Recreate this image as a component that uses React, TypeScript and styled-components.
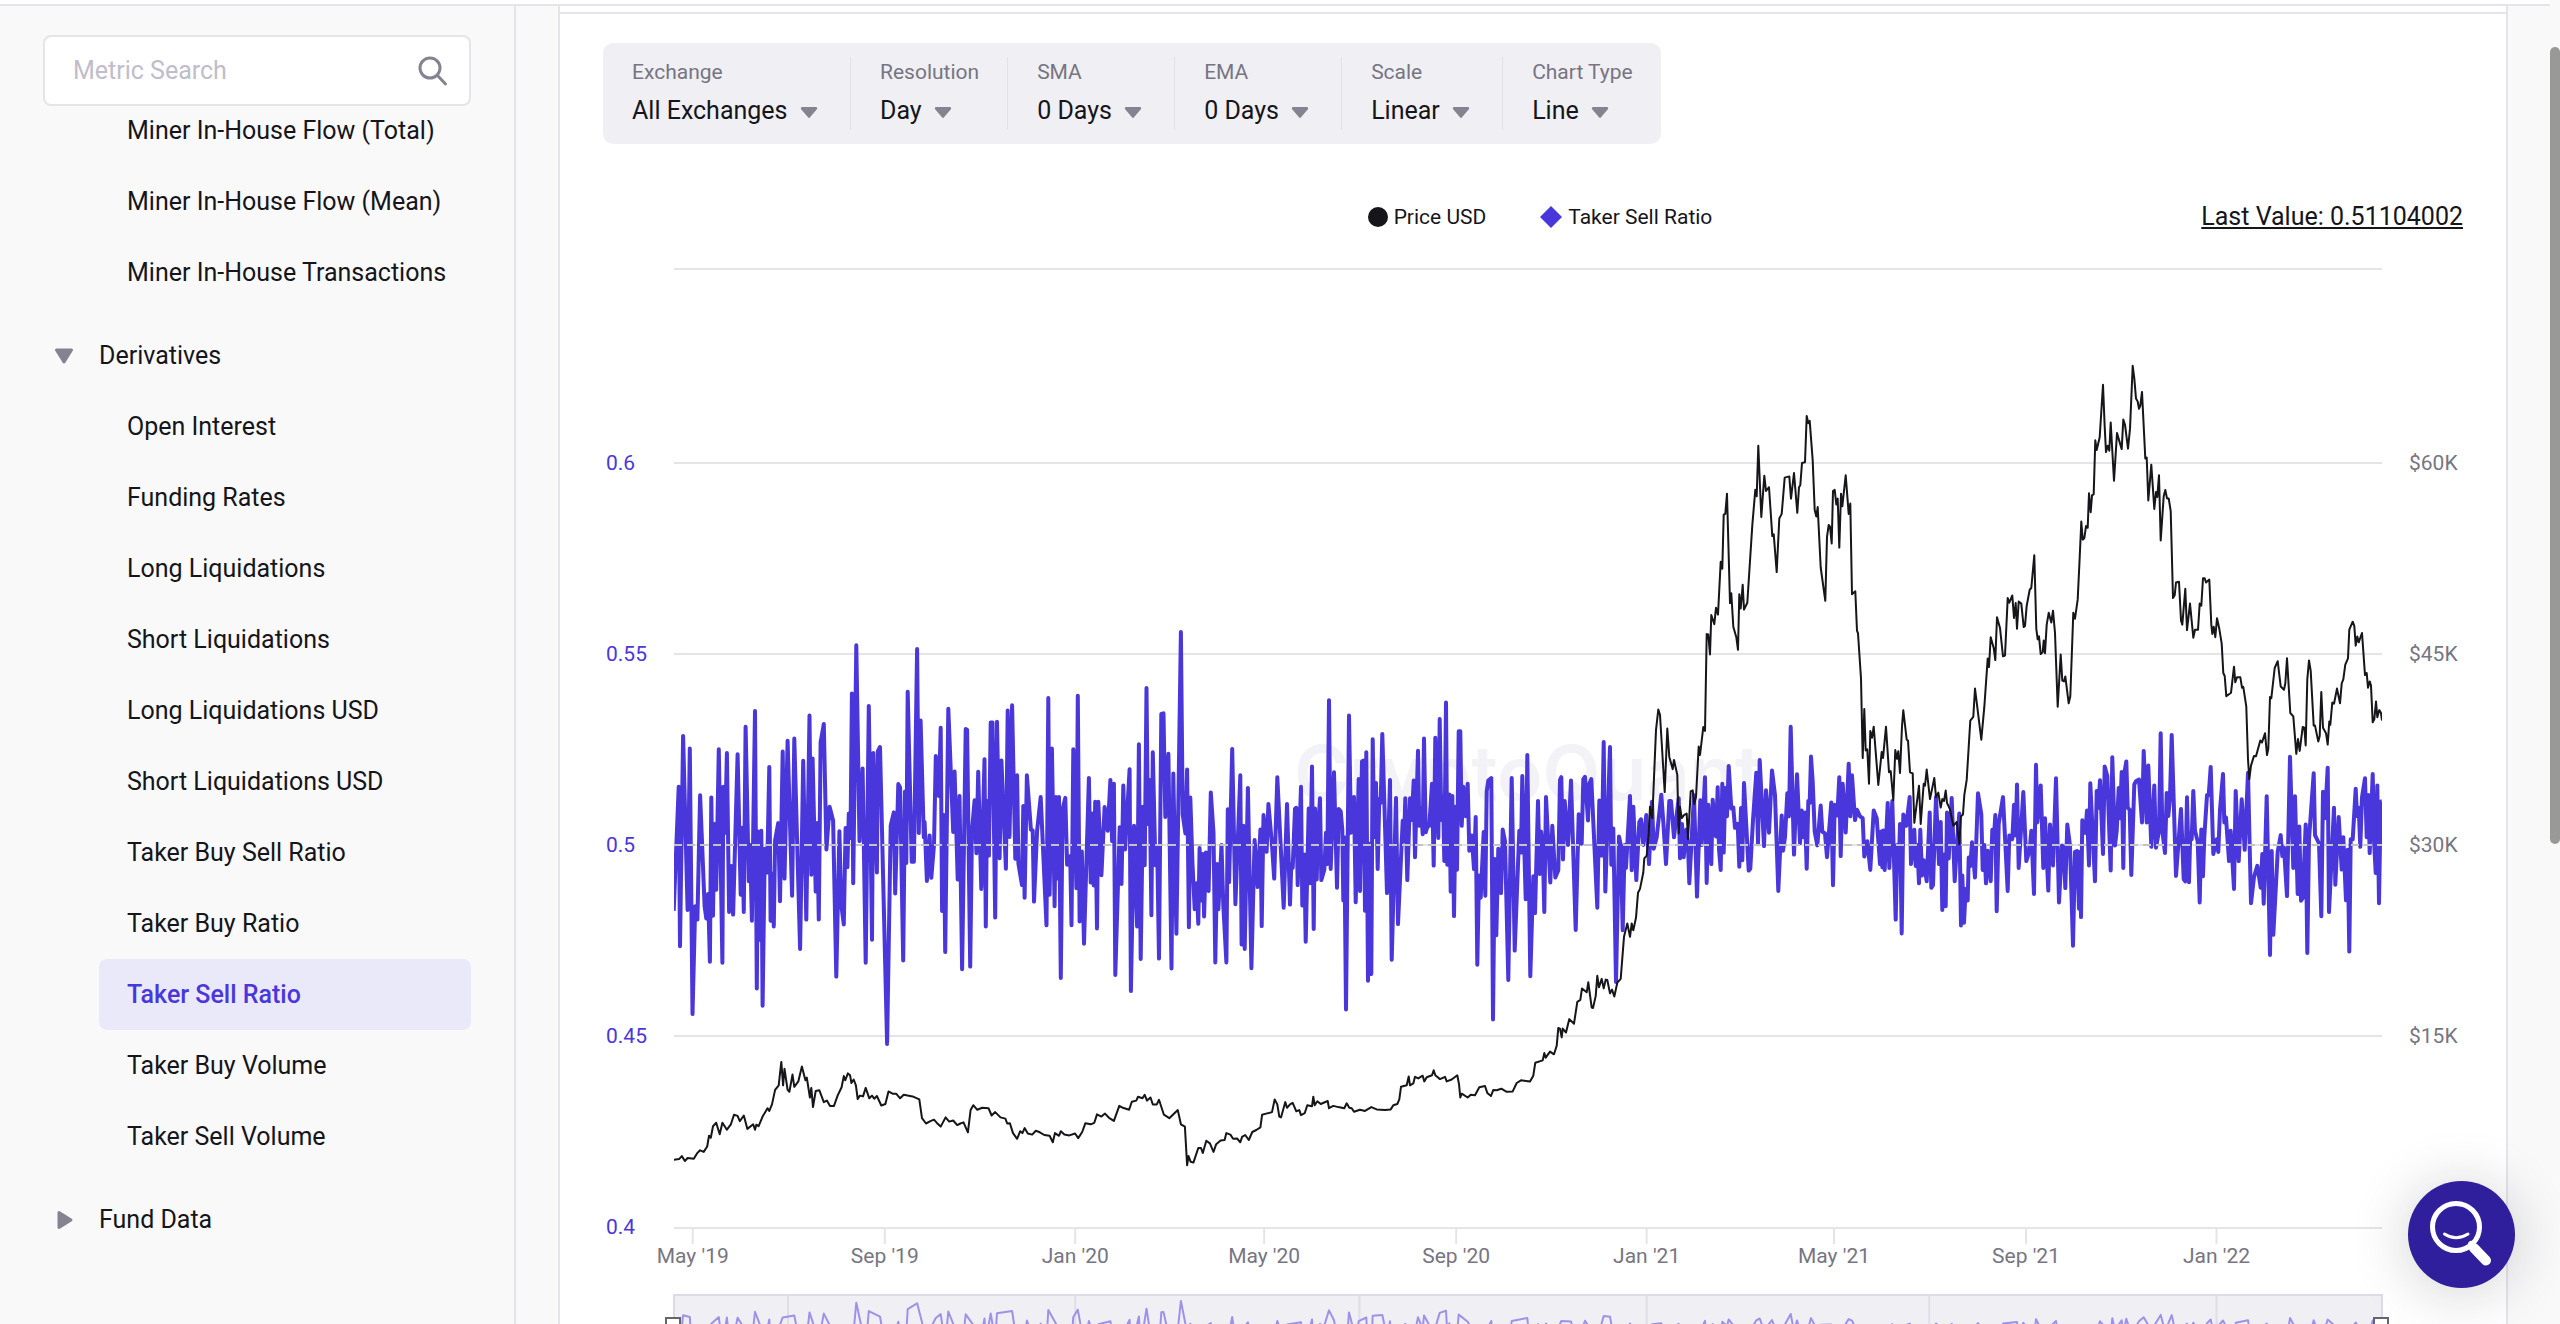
import React from 'react';
import styled, { createGlobalStyle } from 'styled-components';

const color = {
  page: '#f9f9fa',
  white: '#ffffff',
  line: '#e5e4eb',
  panel: '#f0eff4',
  text: '#15151a',
  muted: '#777582',
  icon: '#868391',
  placeholder: '#bfbdcb',
  accent: '#4a37db',
  accentSoft: '#eae9fa',
  fab: '#2f1f9c',
};

const GlobalStyle = createGlobalStyle`
  *, *::before, *::after { box-sizing: border-box; }
  html, body, #root { height: 100%; }
  body {
    margin: 0;
    overflow: hidden;
    background: ${color.page};
    color: ${color.text};
    font-family: Roboto, "Liberation Sans", sans-serif;
    font-size: 25px;
    line-height: 30px;
  }
  button, input, select { font: inherit; color: inherit; }
`;

/* ---------- series ---------- */

type Chunk = { origin: [number, number]; scale: [number, number]; points: string };
type Point = [number, number];

const PLOT_LEFT = 674;
const PLOT_TOP = 268;
const PLOT_WIDTH = 1708;
const PLOT_HEIGHT = 960;

const ratioChunks: Chunk[] = [
  {
    origin: [580, 600],
    scale: [2.24, 2.613],
    points: `210,812 221,488 224,905 231,355 241,810 246,388 252,1082 258,800 263,835 269,510 279,800 283,832 287,768 291,945 294,516 298,825 301,585 305,757 311,390 319,948 321,488 325,608 329,400 334,815 339,695 343,822 353,403 360,770 363,595 367,815 371,331 378,735 381,640 385,838 392,290 396,1015 399,605 402,888 406,603 409,1060 414,650 419,712 424,436 427,838 430,715 434,853 437,628 444,583 448,787 454,396 458,728 465,368 475,773 480,362 493,912 500,420 507,835 514,302 518,718 521,414 528,762 531,583 535,835 539,372 546,324 552,652 559,540 567,576 574,984 581,604 585,795 591,848 595,596 599,698 602,558 606,622 609,244 612,740 619,118 626,630 633,440 640,948 647,277 654,888 657,400 665,712 667,396 672,384 688,1160 696,590 703,555 706,767 713,481 717,490 724,942 728,500 731,687 734,240 743,684 748,684 755,128 759,609 763,315 770,620 772,580 777,734 783,615 787,726 793,640 797,408 804,512 808,334 811,813 815,562 818,920 825,284 836,606 839,448 846,730 850,512 856,965 864,337 867,339 874,958 878,603 884,523 888,662 892,449 899,755 906,416 909,853 912,525 916,668 920,320 924,320 930,830 934,318 940,675 944,419 954,702 958,289 962,619 968,275 975,676 979,458 982,688 990,745 993,538 996,778 1001,458 1010,600 1014,602 1017,788 1024,603 1032,515 1045,850 1049,256 1052,770 1057,388 1063,800 1066,515 1070,728 1073,515 1077,988 1081,547 1087,517 1091,692 1098,670 1101,850 1105,390 1112,753 1115,250 1119,840 1124,657 1129,898 1140,465 1144,738 1147,558 1151,746 1154,527 1158,858 1161,527 1168,719 1175,541 1182,603 1188,470 1192,630 1196,480 1199,980 1209,594 1213,742 1217,485 1221,652 1231,442 1234,1022 1241,590 1248,853 1252,377 1256,938 1261,540 1265,693 1269,230 1272,585 1276,470 1280,824 1283,398 1289,693 1293,648 1297,937 1302,298 1307,296 1311,567 1318,402 1325,963 1329,453 1336,872 1346,84 1350,560 1356,610 1360,443 1364,855 1367,516 1372,690 1377,808 1381,740 1385,846 1388,648 1392,785 1395,664 1398,827 1402,660 1408,760 1413,503 1419,607 1423,947 1427,690 1430,808 1437,640 1441,798 1448,947 1451,547 1454,737 1461,389 1468,795 1479,458 1482,900 1486,590 1489,912 1496,491 1504,962 1511,627 1518,750 1524,600 1527,852 1531,562 1538,658 1542,533 1550,640 1555,728 1562,463`,
  },
  {
    origin: [1200, 600],
    scale: [3, 2.613],
    points: `251,804 261,533 270,796 274,690 278,700 285,545 289,543 293,745 303,488 307,798 313,665 317,893 326,545 330,740 336,435 341,860 345,545 350,730 354,600 360,518 364,732 373,705 378,608 382,690 387,262 392,703 402,450 411,752 416,546 422,552 427,600 430,785 433,620 438,1070 447,302 453,608 462,515 467,790 476,468 480,760 486,422 490,420 495,812 499,398 504,995 509,637 514,977 518,364 523,620 528,478 533,703 538,520 542,530 547,350 561,766 570,470 575,940 588,517 594,847 608,577 612,630 616,518 622,732 630,518 635,575 641,472 645,672 654,394 658,590 663,545 668,612 672,362 677,607 683,590 688,590 696,480 701,694 706,360 715,622 719,311 724,575 729,515 733,682 738,268 742,692 748,508 752,762 757,512 762,826 767,540 771,705 776,343 781,343 785,590 790,488 797,565 803,480 808,655 815,615 822,703 827,567 832,953 837,720 842,778 851,606 856,773 860,500 865,472 874,465 879,1096 884,677 889,876 895,650 903,766 908,600 915,630 925,993 935,465 944,916 958,603 963,660 967,460 977,782 982,405 991,983 1000,722 1005,818 1014,525 1019,716 1023,605 1028,640 1033,815 1038,515 1051,738 1057,590 1066,725 1075,706 1080,470 1084,463 1089,678 1094,525 1104,640 1113,472 1127,862 1136,560 1145,637 1150,468 1155,462 1164,576 1168,480 1174,468 1192,804 1198,524 1205,668 1211,371 1216,762 1230,384 1234,692 1240,597 1248,998 1257,618 1262,640 1268,863 1274,640 1278,700 1290,512 1295,706 1300,540 1309,732 1318,580 1323,573 1330,640 1339,562 1347,690 1356,527 1361,650 1370,620 1384,509 1390,580 1398,690 1408,525 1413,525 1422,620 1436,518 1440,675 1446,585 1451,672 1459,600 1464,640`,
  },
  {
    origin: [1600, 380],
    scale: [3, 2.613],
    points: `268,1315 282,1085 291,1350 301,1098 305,1215 315,1038 320,1314 325,1110 334,1265 338,1097 348,1193 353,1064 357,1225 362,1280 367,1055 371,1235 376,1066 381,1140 386,1009 394,1120 400,1117 405,1170 413,1160 418,1272 423,1118 427,1255 432,1053 446,1282 451,1277 459,1150 469,1026 474,1213 479,993 492,1218 498,1072 507,1183 516,1020 525,1085 535,1335 545,1138 549,1230 555,1195 562,1080 567,1140 572,906 582,1240 591,1030 600,1210 605,1125 611,1195 615,1130 620,1277 625,1100 629,1105 633,984 638,1050 644,1180 652,1216 662,1112 667,1180 675,1185 681,1247 694,1104 699,1320 704,1110 712,1138 718,1038 722,1244 728,1055 737,1182 746,1003 751,1140 756,1033 765,1150 771,1123 780,1140 788,1145 793,1245 802,1205 811,1280 821,1125 830,1145 840,1265 844,1180 847,1273 850,1177 854,1280 863,1105 868,1275 877,1100 887,1410 892,1215 896,1280 900,1160 905,1446 910,1135 919,1165 929,1090 933,1265 943,1175 947,1270 952,1215 957,1315 961,1175 966,1295 971,1255 980,1310 989,1130 994,1327 999,1320 1008,1090 1017,1265 1022,1155 1027,1385 1032,1240 1037,1375 1041,1130 1046,1250 1055,1092 1064,1310 1072,1200 1078,1133 1083,1425 1087,1295 1092,1418 1097,1330 1103,1360 1106,1248 1111,1270 1116,1208 1125,1300 1134,1080 1144,1135 1148,1280 1153,1215 1158,1315 1163,1230 1172,1310 1177,1175 1181,1210 1186,1137 1190,1388 1196,1160 1209,1090 1223,1335 1228,1190 1237,1200 1242,1110 1247,1190`,
  },
  {
    origin: [1980, 330],
    scale: [3, 2.376],
    points: `111,1080 116,1278 130,1098 139,1262 149,1235 154,1190 162,1340 168,1033 172,1170 182,1082 190,1278 195,1160 205,1332 210,1175 219,1272 228,1065 237,1360 246,1225 251,1230 256,1326 262,1175 270,1225 279,1463 285,1240 291,1238 297,1375 299,1240 303,1395 307,1165 316,1195 321,1142 327,1272 331,1077 345,1310 350,1095 355,1135 360,1070 369,1245 374,1037 382,1060 392,1284 397,1015 405,1225 410,1190 416,1088 420,1160 425,1050 430,1278 434,1048 439,1025 443,1135 449,1140 454,1295 463,1080 468,1072 477,1068 486,1170 491,1000 500,1170 505,1035 514,1228 523,1082 528,1230 537,1190 542,958 547,1190 555,1243 560,1100 565,1155 570,1110 575,962 588,1297 603,1138 611,1305 616,1310 621,1110 627,1312 631,1195 635,1210 640,1095 645,1190 653,1215 659,1360 664,1187 669,1298 673,1205 681,1105 686,1105 692,1038 700,1245 710,1210 715,1240 720,1140 729,1055 733,1170 738,1158 747,1262 752,1190 762,1328 767,1095 776,1262 785,1115 794,1235 804,1052 813,1362 822,1300 832,1273 842,1325 847,1245 851,1363 860,1108 870,1485 875,1238 880,1437 893,1240 902,1200 907,1250 912,1230 921,1345 930,1014 940,1278 945,1108 953,1340 958,1180 963,1356 968,1350 977,1175 982,1480 987,1210 1001,1053 1005,1200 1017,1220 1024,1393 1029,1097 1035,1160 1043,1040 1047,1383 1062,1135 1066,1318 1076,1157 1085,1282 1090,1205 1098,1355 1103,1235 1108,1477 1112,1210 1118,1210 1127,1090 1131,1155 1136,1135 1141,1228 1146,1110 1155,1065 1160,1205 1165,1105 1169,1243 1178,1055 1183,1225 1187,1290 1192,1082 1197,1362 1202,1120 1205,1120`,
  },
];

const priceChunks: Chunk[] = [
  {
    origin: [580, 600],
    scale: [2.24, 2.613],
    points: `210,1463 222,1461 228,1453 235,1466 241,1458 255,1460 262,1446 269,1438 277,1442 285,1428 289,1400 293,1405 298,1375 305,1366 313,1396 319,1366 329,1384 338,1370 345,1345 353,1348 358,1362 367,1347 375,1382 388,1370 392,1384 395,1371 400,1375 409,1350 420,1328 424,1335 430,1318 437,1280 445,1268 451,1207 455,1268 458,1225 465,1280 469,1285 476,1240 480,1272 489,1258 497,1219 505,1255 508,1248 515,1300 518,1275 522,1325 528,1283 536,1281 546,1312 553,1308 560,1322 569,1322 577,1295 586,1273 591,1244 594,1255 600,1237 605,1242 608,1262 613,1253 618,1268 622,1304 627,1295 634,1297 640,1275 648,1302 654,1295 659,1303 665,1296 675,1321 684,1317 691,1284 700,1290 708,1290 717,1302 725,1293 745,1297 760,1305 766,1354 775,1368 785,1362 793,1358 800,1367 808,1376 819,1352 827,1363 836,1360 845,1372 852,1368 859,1365 869,1391 875,1333 881,1320 890,1332 901,1327 915,1328 922,1347 930,1338 942,1352 953,1355 957,1368 963,1367 970,1393 979,1408 986,1388 991,1393 996,1380 1003,1394 1013,1397 1021,1387 1030,1391 1040,1398 1052,1400 1059,1417 1064,1393 1073,1400 1077,1388 1085,1397 1096,1399 1109,1394 1116,1406 1125,1390 1132,1367 1144,1370 1152,1366 1158,1344 1168,1350 1176,1342 1185,1353 1196,1361 1208,1322 1216,1327 1230,1332 1236,1311 1246,1308 1250,1298 1260,1302 1265,1293 1270,1308 1278,1300 1283,1318 1292,1318 1297,1306 1308,1345 1320,1354 1328,1345 1339,1333 1346,1370 1355,1376 1360,1477 1363,1453 1368,1468 1374,1470 1385,1432 1391,1432 1395,1445 1403,1413 1411,1420 1419,1442 1425,1422 1435,1412 1444,1411 1448,1393 1457,1397 1463,1408 1472,1407 1479,1417 1483,1403 1490,1398 1498,1411 1506,1390 1515,1385 1524,1378 1528,1345 1537,1342 1550,1338`,
  },
  {
    origin: [1200, 600],
    scale: [3, 2.613],
    points: `224,1305 232,1318 238,1350 243,1352 256,1312 261,1327 270,1318 278,1314 289,1336 298,1333 303,1346 314,1341 322,1320 336,1323 340,1298 344,1320 352,1310 362,1317 383,1309 387,1328 400,1322 415,1325 433,1328 440,1315 448,1327 455,1328 462,1337 480,1332 495,1335 514,1325 530,1331 555,1333 572,1331 580,1320 592,1317 598,1305 603,1272 620,1268 626,1245 630,1268 640,1263 645,1246 655,1250 668,1243 673,1258 680,1247 696,1242 701,1229 706,1242 720,1252 735,1246 740,1258 755,1253 772,1242 777,1265 781,1300 785,1290 803,1300 812,1293 825,1294 838,1273 855,1270 862,1288 873,1296 880,1280 890,1281 904,1277 920,1285 938,1284 950,1262 963,1255 990,1258 1000,1243 1006,1209 1028,1203 1033,1184 1037,1196 1050,1180 1062,1187 1070,1165 1075,1118 1080,1120 1085,1143 1088,1120 1098,1130 1108,1095 1122,1107 1132,1050 1141,1045 1146,1015 1160,1025 1165,999 1175,1065 1179,1066 1187,1035 1192,982 1197,1012 1205,990 1211,1015 1217,992 1222,993 1230,1028 1236,1018 1243,1036 1252,1000 1262,990 1272,880 1282,845 1290,880 1295,845 1300,863 1308,830 1314,765 1320,755 1330,712 1333,675 1340,668 1346,610 1350,540 1357,570 1368,340 1375,286 1380,300 1394,502 1402,336 1408,410 1418,442 1422,418 1432,457 1436,610 1440,540 1445,570 1452,562 1460,558`,
  },
  {
    origin: [1600, 380],
    scale: [3, 2.613],
    points: `264,1200 272,1075 278,1072 283,1108 288,1090 296,958 300,980 310,907 315,917 320,664 325,665 330,717 334,614 343,638 348,595 354,613 362,475 367,493 371,352 376,350 381,297 390,583 394,557 400,645 409,672 414,705 418,560 422,597 428,535 432,600 442,582 457,380 466,287 470,304 475,172 484,358 493,250 498,290 507,280 517,408 521,403 530,502 538,362 545,350 554,255 568,252 573,310 582,243 592,347 597,280 601,275 606,217 615,215 620,94 625,113 629,107 638,210 644,340 649,357 653,332 662,490 676,577 681,410 686,379 690,383 695,427 699,290 704,287 709,325 713,310 718,438 723,297 727,330 737,249 746,350 751,323 756,560 766,552 771,655 774,662 783,780 788,988 793,860 797,968 802,965 807,1055 811,917 816,935 821,906 835,1058 845,972 849,988 858,906 867,1025 872,1022 880,1098 886,967 891,990 895,970 900,1027 906,905 910,863 920,940 924,942 930,1025 938,1028 943,1157 957,1060 962,1160 971,1055 975,1060 980,1018 990,1095 1003,1040 1008,1090 1015,1078 1022,1117 1027,1095 1032,1100 1037,1073 1041,1105 1050,1122 1060,1165 1070,1155 1078,1213 1083,1140 1089,1135 1093,1085 1100,1045 1111,890 1120,880 1125,806 1144,940 1153,855 1163,728 1167,750 1172,672 1181,700 1186,732 1191,620 1200,648 1209,722 1215,720 1223,570 1228,582 1237,563 1242,622 1247,583`,
  },
  {
    origin: [1980, 330],
    scale: [3, 2.376],
    points: `111,710 116,645 124,650 131,706 135,703 140,655 149,617 154,613 163,535 169,710 173,735 177,728 182,770 188,765 191,738 195,768 200,700 206,672 214,695 219,667 225,720 233,895 242,771 247,833 252,835 256,823 266,887 271,870 280,672 285,686 293,640 299,540 304,455 308,498 313,495 318,466 323,470 327,388 332,433 336,393 341,390 346,262 350,285 359,255 369,130 374,230 378,290 383,275 388,287 392,220 402,358 411,245 425,283 430,213 435,225 444,282 450,235 458,85 463,115 468,163 473,170 477,187 481,180 486,147 496,305 500,303 505,405 514,320 523,425 528,385 532,397 537,345 542,500 551,395 556,380 561,400 566,400 572,430 579,637 584,630 588,600 597,598 603,690 607,700 616,615 621,713 630,650 640,731 645,712 654,712 659,650 664,655 669,590 674,590 678,600 688,593 694,700 697,722 701,705 706,730 711,685 718,710 725,745 730,815 734,822 739,870 753,862 757,835 762,800 766,837 771,825 781,825 786,850 790,848 799,895 804,1020 808,1067 813,1035 822,1012 828,1013 841,975 846,980 855,958 861,1010 865,995 870,872 874,875 884,803 893,787 902,847 912,855 916,840 921,780 931,910 940,918 949,1007 954,972 959,1000 968,943 973,945 977,987 982,830 987,785 992,810 1001,940 1005,940 1015,978 1019,965 1024,860 1029,945 1038,958 1043,985 1048,930 1051,938 1057,885 1062,888 1071,852 1080,887 1085,840 1090,830 1096,795 1104,780 1108,712 1118,693 1123,703 1127,750 1132,728 1136,742 1146,720 1155,820 1160,815 1164,850 1169,835 1173,845 1178,932 1183,925 1188,883 1192,920 1198,903 1203,910 1206,928`,
  },
];

const decode = (chunks: Chunk[]): Point[] =>
  chunks.flatMap(({ origin, scale, points }) =>
    points.split(/\s+/).map((pair): Point => {
      const [x, y] = pair.split(',').map(Number);
      return [origin[0] + x / scale[0] - PLOT_LEFT, origin[1] + y / scale[1] - PLOT_TOP];
    }),
  );

const toPath = (points: Point[]) => points.map(([x, y]) => `${x.toFixed(1)},${y.toFixed(1)}`).join(' ');

/* Keeps the highest and the lowest sample of each group, in time order. */
const thin = (points: Point[], size: number): Point[] => {
  const out: Point[] = [];
  for (let i = 0; i < points.length; i += size) {
    const group = points.slice(i, i + size);
    const top = group.reduce((a, b) => (b[1] < a[1] ? b : a));
    const bottom = group.reduce((a, b) => (b[1] > a[1] ? b : a));
    out.push(...[top, bottom].sort((a, b) => a[0] - b[0]));
  }
  return out;
};

const ratio = decode(ratioChunks);
const price = decode(priceChunks);
const overview = thin(ratio, 5).map(([x, y]): Point => [x, 6 + (y - 364) * 0.137]);

const FIRST_DAY = Date.UTC(2019, 3, 19);
const LAST_DAY = Date.UTC(2022, 3, 17);
const dayToPercent = (year: number, month: number) =>
  `${(((Date.UTC(year, month, 1) - FIRST_DAY) / (LAST_DAY - FIRST_DAY)) * 100).toFixed(3)}%`;

const timeTicks = [
  { label: "May '19", x: dayToPercent(2019, 4) },
  { label: "Sep '19", x: dayToPercent(2019, 8) },
  { label: "Jan '20", x: dayToPercent(2020, 0) },
  { label: "May '20", x: dayToPercent(2020, 4) },
  { label: "Sep '20", x: dayToPercent(2020, 8) },
  { label: "Jan '21", x: dayToPercent(2021, 0) },
  { label: "May '21", x: dayToPercent(2021, 4) },
  { label: "Sep '21", x: dayToPercent(2021, 8) },
  { label: "Jan '22", x: dayToPercent(2022, 0) },
];

const overviewTicks = [
  dayToPercent(2019, 6),
  dayToPercent(2020, 0),
  dayToPercent(2020, 6),
  dayToPercent(2021, 0),
  dayToPercent(2021, 6),
  dayToPercent(2022, 0),
];

/* ---------- page frame ---------- */

const Page = styled.div`
  display: flex;
  flex-direction: column;
  height: 100vh;
  overflow: hidden;
`;

const TopEdge = styled.header`
  flex: none;
  height: 6px;
  margin-right: 10px;
  background: ${color.white};
  border-bottom: 2px solid ${color.line};
`;

const Body = styled.div`
  display: flex;
  flex: 1;
  min-height: 0;
`;

const ScrollThumb = styled.div`
  position: fixed;
  top: 47px;
  right: 0;
  width: 10px;
  height: 797px;
  border-radius: 5px;
  background: #999997;
`;

/* ---------- sidebar ---------- */

const Sidebar = styled.aside`
  flex: none;
  width: 516px;
  overflow: hidden;
  border-right: 2px solid ${color.line};
`;

const SearchArea = styled.form`
  position: relative;
  z-index: 1;
  padding: 29px 43px 14px;
  background: ${color.page};
`;

const SearchBox = styled.label`
  display: flex;
  align-items: center;
  height: 71px;
  padding: 0 20px 0 28px;
  background: ${color.white};
  border: 2px solid ${color.line};
  border-radius: 8px;
`;

const SearchInput = styled.input`
  flex: 1;
  min-width: 0;
  padding: 0;
  border: 0;
  outline: 0;
  background: transparent;
  &::placeholder { color: ${color.placeholder}; opacity: 1; }
`;

const IconButton = styled.button`
  display: flex;
  padding: 0;
  border: 0;
  background: none;
`;

const Nav = styled.nav`
  display: flex;
  flex-direction: column;
  gap: 12px;
  margin-top: -25px;
  padding: 0 43px;
`;

const MetricList = styled.ul`
  margin: 0;
  padding: 0 0 0 56px;
  list-style: none;
`;

const MetricLink = styled.a<{ $active?: boolean }>`
  display: flex;
  align-items: center;
  height: 71px;
  padding: 0 28px;
  border-radius: 8px;
  white-space: nowrap;
  text-decoration: none;
  color: ${(p) => (p.$active ? color.accent : color.text)};
  background: ${(p) => (p.$active ? color.accentSoft : 'transparent')};
  font-weight: ${(p) => (p.$active ? 500 : 400)};
`;

const SectionButton = styled.button`
  display: flex;
  align-items: center;
  gap: 24px;
  width: 100%;
  height: 71px;
  padding: 0 10px;
  border: 0;
  background: none;
  text-align: left;
`;

const caretPaths = {
  down: 'M3.500 5H18.500L11 17Z',
  right: 'M6 3.500L18 11L6 18.500Z',
  flat: 'M3.500 8H18.500L11 17Z',
};

const Caret = ({ size, kind }: { size: number; kind: keyof typeof caretPaths }) => (
  <svg width={size} height={size} viewBox="0 0 22 22" aria-hidden="true">
    <path d={caretPaths[kind]} fill={color.icon} stroke={color.icon} strokeWidth="3" strokeLinejoin="round" />
  </svg>
);

const minerMetrics = ['Miner In-House Flow (Total)', 'Miner In-House Flow (Mean)', 'Miner In-House Transactions'];
const derivativeMetrics = [
  'Open Interest',
  'Funding Rates',
  'Long Liquidations',
  'Short Liquidations',
  'Long Liquidations USD',
  'Short Liquidations USD',
  'Taker Buy Sell Ratio',
  'Taker Buy Ratio',
  'Taker Sell Ratio',
  'Taker Buy Volume',
  'Taker Sell Volume',
];

const Metrics = ({ names }: { names: string[] }) => (
  <MetricList>
    {names.map((name) => (
      <li key={name}>
        <MetricLink href="#" $active={name === 'Taker Sell Ratio'}>
          {name}
        </MetricLink>
      </li>
    ))}
  </MetricList>
);

/* ---------- main panel ---------- */

const Main = styled.main`
  flex: 1;
  min-width: 0;
  padding: 0 52px 0 42px;
`;

const Panel = styled.section`
  min-height: 100%;
  border: solid ${color.line};
  border-width: 0 2px;
  background: ${color.white};
`;

const PanelRule = styled.div`
  height: 8px;
  border-bottom: 2px solid ${color.line};
`;

const PanelContent = styled.div`
  padding: 29px 43px 0;
`;

const Toolbar = styled.div`
  display: inline-flex;
  padding: 14px 0;
  border-radius: 10px;
  background: ${color.panel};
`;

const Field = styled.label`
  display: flex;
  flex-direction: column;
  justify-content: space-between;
  height: 73px;
  padding: 0 28px 0 29px;
  & + & { border-left: 1px solid #e2e1ea; }
`;

const FieldName = styled.span`
  color: ${color.muted};
  font-size: 21px;
  line-height: 30px;
`;

const SelectWrap = styled.span`
  display: grid;
  justify-content: start;
  align-items: center;
  & > * { grid-area: 1 / 1; }
  & > svg { justify-self: end; margin-right: 3px; pointer-events: none; }
`;

const Select = styled.select`
  appearance: none;
  height: 38px;
  padding: 0 34px 0 0;
  border: 0;
  outline: 0;
  background: transparent;
`;

const fields = [
  ['Exchange', 'All Exchanges'],
  ['Resolution', 'Day'],
  ['SMA', '0 Days'],
  ['EMA', '0 Days'],
  ['Scale', 'Linear'],
  ['Chart Type', 'Line'],
];

const LegendRow = styled.div`
  display: grid;
  grid-template-columns: 1fr auto 1fr;
  align-items: center;
  margin-top: 58px;
`;

const Legend = styled.div`
  display: flex;
  grid-column: 2;
  gap: 54px;
  padding-left: 14px;
`;

const LegendItem = styled.button`
  display: flex;
  align-items: center;
  gap: 6px;
  padding: 0;
  border: 0;
  background: none;
  font-size: 21px;
`;

const LastValue = styled.a`
  justify-self: end;
  color: ${color.text};
  text-decoration: underline;
`;

const ChartGrid = styled.div`
  display: grid;
  grid-template-columns: 71px minmax(0, 1fr) 81px;
  margin-top: 36px;
`;

const Axis = styled.ul<{ $right?: boolean }>`
  margin: 0;
  padding: ${(p) => (p.$right ? '182px 0 0 27px' : '182px 0 0 3px')};
  list-style: none;
  color: ${(p) => (p.$right ? color.muted : color.accent)};
  font-size: 21px;
  line-height: 26px;
  & > li { height: 191px; }
  & > li:last-child { height: 26px; }
`;

const Plot = styled.svg`
  display: block;
  width: 100%;
  height: 1027px;
  overflow: visible;
`;

const Watermark = styled.text`
  font-family: Inter, sans-serif;
  font-size: 75px;
  font-weight: 600;
  fill: #f3f2f7;
`;

const TimeLabel = styled.text`
  font-size: 21px;
  fill: ${color.muted};
`;

const Overview = styled.svg`
  display: block;
  grid-column: 2;
  width: 100%;
  height: 80px;
  overflow: visible;
`;

const Handle = () => (
  <g>
    <rect x="-8" y="23" width="14" height="30" fill="#fff" stroke="#666470" strokeWidth="2" />
    <path d="M-3 30V46M1 30V46" stroke="#666470" strokeWidth="2" />
  </g>
);

const ChatButton = styled.button`
  position: fixed;
  right: 45px;
  bottom: 36px;
  width: 107px;
  height: 107px;
  padding: 0;
  border: 0;
  border-radius: 50%;
  background: ${color.fab};
  box-shadow: 0 4px 60px rgba(20, 20, 30, 0.2);
`;

const gridRows = [1, 195, 386, 577, 768, 960];

const Chart = () => (
  <ChartGrid>
    <Axis>
      <li>0.6</li>
      <li>0.55</li>
      <li>0.5</li>
      <li>0.45</li>
      <li>0.4</li>
    </Axis>
    <Plot role="img" aria-label="Price USD and Taker Sell Ratio">
      <Watermark x="50%" y="532" textAnchor="middle">
        CryptoQuant
      </Watermark>
      {gridRows.map((y) => (
        <line key={y} x1="0" x2="100%" y1={y} y2={y} stroke={color.line} strokeWidth="2" />
      ))}
      {timeTicks.map(({ label, x }) => (
        <React.Fragment key={label}>
          <line x1={x} x2={x} y1="961" y2="976" stroke={color.line} strokeWidth="2" />
          <TimeLabel x={x} y="995" textAnchor="middle">
            {label}
          </TimeLabel>
        </React.Fragment>
      ))}
      <svg
        width="100%"
        height={PLOT_HEIGHT}
        viewBox={`0 0 ${PLOT_WIDTH} ${PLOT_HEIGHT}`}
        preserveAspectRatio="none"
        fill="none"
        strokeLinejoin="round"
      >
        <polyline points={toPath(ratio)} stroke={color.accent} strokeWidth="4" vectorEffect="non-scaling-stroke" />
        <polyline points={toPath(price)} stroke={color.text} strokeWidth="2" vectorEffect="non-scaling-stroke" />
      </svg>
      <line x1="0" x2="100%" y1="577" y2="577" stroke="#c3c3c3" strokeWidth="2" strokeDasharray="8 5" />
    </Plot>
    <Axis $right>
      <li>$60K</li>
      <li>$45K</li>
      <li>$30K</li>
      <li>$15K</li>
    </Axis>
    <Overview aria-hidden="true">
      <rect width="100%" height="80" fill={color.panel} stroke="#dddce6" strokeWidth="2" />
      {overviewTicks.map((x) => (
        <line key={x} x1={x} x2={x} y1="0" y2="80" stroke="#dfdee7" strokeWidth="2" />
      ))}
      <svg width="100%" height="80" viewBox={`0 0 ${PLOT_WIDTH} 80`} preserveAspectRatio="none">
        <polyline
          points={toPath(overview)}
          fill="none"
          stroke="#a091e8"
          strokeWidth="2"
          strokeLinejoin="round"
          vectorEffect="non-scaling-stroke"
        />
      </svg>
      <Handle />
      <svg x="100%" overflow="visible">
        <Handle />
      </svg>
    </Overview>
  </ChartGrid>
);

export default function App() {
  return (
    <Page>
      <GlobalStyle />
      <TopEdge />
      <Body>
        <Sidebar>
          <SearchArea onSubmit={(e) => e.preventDefault()}>
            <SearchBox>
              <SearchInput type="text" placeholder="Metric Search" aria-label="Metric Search" />
              <IconButton type="submit" aria-label="Search">
                <svg width="32" height="32" viewBox="0 0 32 32" fill="none" stroke={color.icon} strokeWidth="3" strokeLinecap="round">
                  <circle cx="13" cy="13" r="10" />
                  <path d="M20.500 20.500L28.500 29" />
                </svg>
              </IconButton>
            </SearchBox>
          </SearchArea>
          <Nav aria-label="Metrics">
            <Metrics names={minerMetrics} />
            <div>
              <SectionButton type="button" aria-expanded="true">
                <Caret size={22} kind="down" />
                Derivatives
              </SectionButton>
              <Metrics names={derivativeMetrics} />
            </div>
            <SectionButton type="button" aria-expanded="false">
              <Caret size={22} kind="right" />
              Fund Data
            </SectionButton>
          </Nav>
        </Sidebar>
        <Main>
          <Panel>
            <PanelRule />
            <PanelContent>
              <Toolbar>
                {fields.map(([name, value]) => (
                  <Field key={name}>
                    <FieldName>{name}</FieldName>
                    <SelectWrap>
                      <Select defaultValue={value}>
                        <option>{value}</option>
                      </Select>
                      <Caret size={20} kind="flat" />
                    </SelectWrap>
                  </Field>
                ))}
              </Toolbar>
              <LegendRow>
                <Legend>
                  <LegendItem type="button">
                    <svg width="20" height="20" aria-hidden="true">
                      <circle cx="10" cy="10" r="10" fill={color.text} />
                    </svg>
                    Price USD
                  </LegendItem>
                  <LegendItem type="button">
                    <svg width="22" height="22" aria-hidden="true">
                      <path d="M11 0L22 11L11 22L0 11Z" fill={color.accent} />
                    </svg>
                    Taker Sell Ratio
                  </LegendItem>
                </Legend>
                <LastValue href="#">Last Value: 0.51104002</LastValue>
              </LegendRow>
              <Chart />
            </PanelContent>
          </Panel>
        </Main>
      </Body>
      <ScrollThumb />
      <ChatButton type="button" aria-label="Open chat">
        <svg width="107" height="107" viewBox="0 0 107 107" fill="none" stroke="#fff" strokeLinecap="round">
          <circle cx="48" cy="46" r="23.500" strokeWidth="5" />
          <path d="M36.500 53Q48 60.500 60 53" strokeWidth="3" />
          <path d="M66 67L78 79.500" strokeWidth="10" />
          <path d="M63 63L67 67" strokeWidth="6" />
        </svg>
      </ChatButton>
    </Page>
  );
}
